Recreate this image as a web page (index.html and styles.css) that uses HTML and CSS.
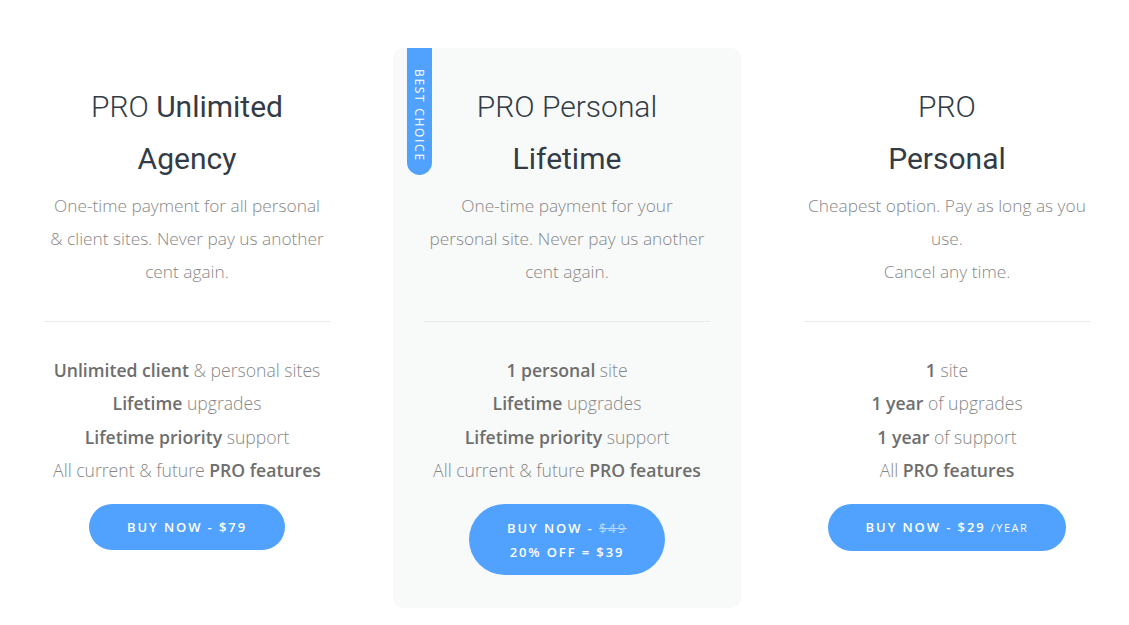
FILE: index.html
```html
<!DOCTYPE html>
<html lang="en">
<head>
<meta charset="utf-8">
<title>Pricing</title>
<link rel="stylesheet" href="styles.css">
</head>
<body>
<section class="pricing">
  <div class="plan">
    <h2 class="plan-title">PRO <b>Unlimited<br>Agency</b></h2>
    <p class="plan-desc">One-time payment for all personal<br>&amp; client sites. Never pay us another<br>cent again.</p>
    <hr class="plan-divider">
    <ul class="plan-features">
      <li><b>Unlimited client</b> &amp; personal sites</li>
      <li><b>Lifetime</b> upgrades</li>
      <li><b>Lifetime priority</b> support</li>
      <li>All current &amp; future <b>PRO features</b></li>
    </ul>
    <a class="buy-btn" href="#">BUY NOW - $79</a>
  </div>
  <div class="plan plan-featured">
    <span class="badge">BEST CHOICE</span>
    <h2 class="plan-title">PRO Personal<br><b>Lifetime</b></h2>
    <p class="plan-desc">One-time payment for your<br>personal site. Never pay us another<br>cent again.</p>
    <hr class="plan-divider">
    <ul class="plan-features">
      <li><b>1 personal</b> site</li>
      <li><b>Lifetime</b> upgrades</li>
      <li><b>Lifetime priority</b> support</li>
      <li>All current &amp; future <b>PRO features</b></li>
    </ul>
    <a class="buy-btn buy-btn-tall" href="#">BUY NOW - <s class="old-price">$49</s><br>20% OFF = $39</a>
  </div>
  <div class="plan">
    <h2 class="plan-title">PRO<br><b>Personal</b></h2>
    <p class="plan-desc">Cheapest option. Pay as long as you<br>use.<br>Cancel any time.</p>
    <hr class="plan-divider">
    <ul class="plan-features">
      <li><b>1</b> site</li>
      <li><b>1 year</b> of upgrades</li>
      <li><b>1 year</b> of support</li>
      <li>All <b>PRO features</b></li>
    </ul>
    <a class="buy-btn" href="#">BUY NOW - $29 <span class="per">/YEAR</span></a>
  </div>
</section>
</body>
</html>
```

FILE: styles.css
```css
* { box-sizing: border-box; }
html, body { margin: 0; padding: 0; background: #ffffff; }
body { font-family: "Open Sans", "Liberation Sans", sans-serif; }

.pricing {
  display: grid;
  grid-template-columns: repeat(3, 348px);
  column-gap: 32px;
  align-items: start;
  margin: 48px 0 0 13px;
}

.plan {
  position: relative;
  padding: 33px 31px 33px;
  text-align: center;
  border-radius: 10px;
}

.plan-featured { background: #f8fafa; }

.badge {
  position: absolute;
  top: 0;
  left: 14px;
  width: 25px;
  height: 127px;
  padding-top: 8px;
  background: #51a2ff;
  color: #ffffff;
  border-radius: 0 0 13px 13px;
  writing-mode: vertical-rl;
  font-size: 12px;
  letter-spacing: 1.7px;
  line-height: 25px;
  white-space: nowrap;
}

.plan-title {
  margin: 0;
  font-family: Roboto, "Liberation Sans", sans-serif;
  font-weight: 300;
  font-size: 30px;
  line-height: 52px;
  color: #333c46;
}
.plan-title b { font-weight: 400; }

.plan-desc {
  margin: 4px 0 0;
  font-size: 17.3px;
  font-weight: 300;
  line-height: 33px;
  color: #888888;
  white-space: nowrap;
}

.plan-divider {
  margin: 33px 0 0;
  border: 0;
  border-top: 1px solid #ececec;
  height: 0;
}

.plan-features {
  list-style: none;
  margin: 32px 0 0;
  padding: 0;
  font-size: 17.6px;
  font-weight: 300;
  line-height: 33.3px;
  color: #888888;
  white-space: nowrap;
}
.plan-features b { font-weight: 600; color: #6e6e6e; }

.buy-btn {
  display: inline-block;
  margin-top: 17px;
  padding: 11px 38px;
  border-radius: 36px;
  background: #51a2ff;
  color: #ffffff;
  text-decoration: none;
  font-size: 13px;
  font-weight: 600;
  letter-spacing: 1.9px;
  line-height: 24px;
  white-space: nowrap;
}
.buy-btn-tall { padding-top: 11.5px; padding-bottom: 11.5px; }
.old-price { color: #b9d8ff; font-weight: 400; }
.per { font-size: 11px; font-weight: 400; letter-spacing: 1.5px; }
```
